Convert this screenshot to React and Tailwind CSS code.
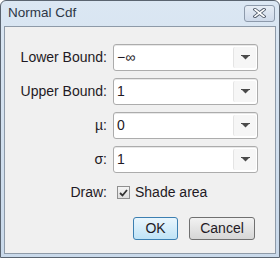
const fields = [
  { label: 'Lower Bound:', value: '−∞' },
  { label: 'Upper Bound:', value: '1' },
  { label: 'µ:', value: '0' },
  { label: 'σ:', value: '1' },
]

function Arrow() {
  return (
    <svg width="9" height="5" viewBox="0 0 9 5">
      <path d="M0.5 0.5h8L4.5 4.5z" fill="#4a4a4a" />
      <rect x="0" y="0" width="9" height="1" fill="#4a4a4a" />
    </svg>
  )
}

function Field({ value }) {
  return (
    <div className="flex h-[27px] items-center rounded-[3px] border border-[#acacac] bg-white pr-[1px] shadow-[inset_0_1px_0_#e8e8e8]">
      <span className="flex-1 pl-[3px] text-[14px] text-[#1f1a24]">{value}</span>
      <div className="flex h-[21px] w-[23px] items-center justify-center rounded-[2px] border-l border-[#e4e4e4] bg-[#f6f6f6]">
        <Arrow />
      </div>
    </div>
  )
}

export default function App() {
  return (
    <div
      className="flex h-[258px] w-[280px] flex-col rounded-t-[6px] border border-[#5a6470] bg-gradient-to-b from-[#dbe7f3] to-[#c9d9ea]"
      style={{ fontFamily: '"Liberation Sans", Arial, sans-serif' }}
    >
      <div className="flex h-[25px] items-center justify-between pl-[7px] pr-[4px]">
        <span className="text-[13.5px] text-[#2e3746]">Normal Cdf</span>
        <div className="mt-[-1px] flex h-[17px] w-[31px] items-center justify-center rounded-[3px] border border-[#8d9aab] bg-gradient-to-b from-[#e6edf5] to-[#cfdaea]">
          <svg width="13" height="10" viewBox="0 0 13 10">
            <path d="M2 1.5l9 7M11 1.5l-9 7" stroke="#4b5666" strokeWidth="3.4" strokeLinecap="square" />
            <path d="M2 1.5l9 7M11 1.5l-9 7" stroke="#ffffff" strokeWidth="1.6" strokeLinecap="square" />
          </svg>
        </div>
      </div>
      <div className="mx-[3px] mb-[3px] flex flex-1 flex-col border border-[#8e9aa8] bg-[#f0f0f0] pt-[17px]">
        <div className="grid grid-cols-[102px_145px] gap-x-[6px] gap-y-[7px]">
          {fields.map((f) => (
            <div key={f.label} className="contents">
              <span className="self-center text-right text-[14px] text-[#1f1a24]">{f.label}</span>
              <Field value={f.value} />
            </div>
          ))}
          <span className="mt-[2px] self-center text-right text-[14px] text-[#1f1a24]">Draw:</span>
          <label className="mt-[2px] flex items-center gap-[5px] pl-[4px]">
            <span className="flex h-[13px] w-[13px] items-center justify-center border border-[#8f8f8f] bg-gradient-to-b from-[#f4f4f4] to-[#dedede]">
              <svg width="9" height="8" viewBox="0 0 9 8">
                <path d="M1 4l2.5 2.5L8 1" stroke="#333" strokeWidth="1.8" fill="none" />
              </svg>
            </span>
            <span className="text-[14px] text-[#1f1a24]">Shade area</span>
          </label>
        </div>
        <div className="mt-[14px] flex justify-end gap-[11px] pr-[20px]">
          <button className="h-[23px] w-[45px] rounded-[3px] border border-[#3c7fb1] bg-gradient-to-b from-[#eaf6fd] to-[#bfe3f6] text-[14px] text-[#1f1a24]">
            OK
          </button>
          <button className="h-[23px] w-[66px] rounded-[3px] border border-[#707070] bg-gradient-to-b from-[#f2f2f2] to-[#d6d6d6] text-[14px] text-[#1f1a24]">
            Cancel
          </button>
        </div>
      </div>
    </div>
  )
}
